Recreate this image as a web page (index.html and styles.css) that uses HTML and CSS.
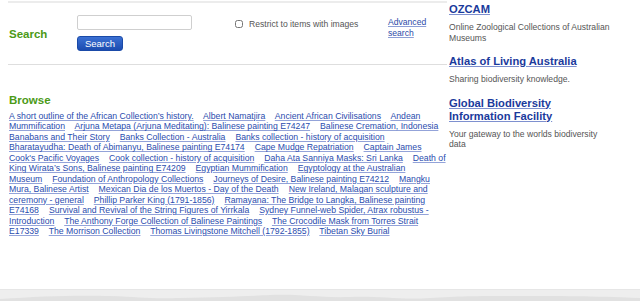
FILE: index.html
```html
<!DOCTYPE html>
<html lang="en">
<head>
    <meta charset="UTF-8">
    <meta name="viewport" content="width=device-width, initial-scale=1.0">
    <title>Browse collections</title>
    <link rel="stylesheet" href="styles.css">
</head>
<body>
    <div class="page">
        <div class="main-column">
            <div class="search-box">
                <h2 class="section-title search-title">Search</h2>
                <form class="search-form">
                    <input type="text" class="search-input">
                    <button type="button" class="search-button">Search</button>
                </form>
                <label class="restrict">
                    <input type="checkbox" class="restrict-check">
                    Restrict to items with images
                </label>
                <a href="#" class="advanced-link">Advanced search</a>
            </div>

            <div class="browse">
                <h2 class="section-title">Browse</h2>
                <div class="browse-list">
                    <a href="#">A short outline of the African Collection’s history.</a>
                    <a href="#">Albert Namatjira</a>
                    <a href="#">Ancient African Civilisations</a>
                    <a href="#">Andean Mummification</a>
                    <a href="#">Arjuna Metapa (Arjuna Meditating): Balinese painting E74247</a>
                    <a href="#">Balinese Cremation, Indonesia</a>
                    <a href="#">Banabans and Their Story</a>
                    <a href="#">Banks Collection - Australia</a>
                    <a href="#">Banks collection - history of acquisition</a>
                    <a href="#">Bharatayudha: Death of Abimanyu, Balinese painting E74174</a>
                    <a href="#">Cape Mudge Repatriation</a>
                    <a href="#">Captain James Cook's Pacific Voyages</a>
                    <a href="#">Cook collection - history of acquisition</a>
                    <a href="#">Daha Ata Sanniya Masks: Sri Lanka</a>
                    <a href="#">Death of King Wirata’s Sons, Balinese painting E74209</a>
                    <a href="#">Egyptian Mummification</a>
                    <a href="#">Egyptology at the Australian Museum</a>
                    <a href="#">Foundation of Anthropology Collections</a>
                    <a href="#">Journeys of Desire, Balinese painting E74212</a>
                    <a href="#">Mangku Mura, Balinese Artist</a>
                    <a href="#">Mexican Dia de los Muertos - Day of the Death</a>
                    <a href="#">New Ireland, Malagan sculpture and ceremony - general</a>
                    <a href="#">Phillip Parker King (1791-1856)</a>
                    <a href="#">Ramayana: The Bridge to Langka, Balinese painting E74168</a>
                    <a href="#">Survival and Revival of the String Figures of Yirrkala</a>
                    <a href="#">Sydney Funnel-web Spider, Atrax robustus - Introduction</a>
                    <a href="#">The Anthony Forge Collection of Balinese Paintings</a>
                    <a href="#">The Crocodile Mask from Torres Strait E17339</a>
                    <a href="#">The Morrison Collection</a>
                    <a href="#">Thomas Livingstone Mitchell (1792-1855)</a>
                    <a href="#">Tibetan Sky Burial</a>
                </div>
            </div>
        </div>

        <div class="side-column">
            <div class="partner">
                <h3><a href="#">OZCAM</a></h3>
                <p>Online Zoological Collections of Australian Museums</p>
            </div>
            <div class="partner">
                <h3><a href="#">Atlas of Living Australia</a></h3>
                <p>Sharing biodiversity knowledge.</p>
            </div>
            <div class="partner">
                <h3><a href="#">Global Biodiversity Information Facility</a></h3>
                <p>Your gateway to the worlds biodiversity data</p>
            </div>
        </div>
    </div>

    <div class="footer">
        <svg class="footer-wave" viewBox="0 0 640 11" preserveAspectRatio="none">
            <path d="M0 9 C40 6 80 5 110 6 C140 7 150 9 180 8 C220 7 250 6 270 5 C300 4 320 8 350 7 C380 6 400 10 430 8 C460 6 480 6 520 6 C560 6 590 6 640 8 L640 11 L0 11 Z" fill="#e1e1e1"/>
        </svg>
    </div>
</body>
</html>
```

FILE: styles.css
```css
html, body {
    margin: 0;
    padding: 0;
}
body {
    font-family: "Liberation Sans", Arial, sans-serif;
    background-color: #fff;
    min-height: 100vh;
    display: flex;
    flex-direction: column;
}
.page {
    flex: 1;
    display: flex;
    gap: 2px;
    padding: 0 0 0 8px;
}
.main-column {
    width: 439px;
}
.search-box {
    display: flex;
    align-items: flex-start;
    border-top: 2px solid #ececec;
    border-bottom: 1px solid #dedede;
    margin-top: 1px;
    height: 64px;
    box-sizing: border-box;
    padding-left: 1px;
}
.section-title {
    margin: 0;
    font-size: 11.5px;
    line-height: 13px;
    font-weight: bold;
    color: #4c9a17;
}
.search-title {
    width: 68px;
    margin-top: 25px;
}
.search-form {
    display: flex;
    flex-direction: column;
    align-items: flex-start;
    gap: 6px;
    margin: 12px 0 0 0;
    width: 158px;
}
.search-input {
    width: 115px;
    height: 15px;
    box-sizing: border-box;
    border: 1px solid #cfcfcf;
    border-radius: 2px;
    margin: 0;
    padding: 0 3px;
}
.search-button {
    width: 46px;
    height: 15px;
    padding: 0;
    border: 1px solid #1a4aa8;
    border-radius: 3px;
    background: linear-gradient(#3b70d3, #1c4cb0);
    color: #fff;
    font-family: "Liberation Sans", Arial, sans-serif;
    font-size: 9.5px;
    line-height: 13px;
}
.restrict {
    display: flex;
    align-items: center;
    gap: 6px;
    margin-top: 16px;
    width: 153px;
    font-size: 8.6px;
    color: #555;
}
.restrict-check {
    width: 8px;
    height: 8px;
    margin: 0;
}
.advanced-link {
    margin-top: 14px;
    width: 45px;
    font-size: 8.6px;
    line-height: 11px;
    color: #2b4aa8;
    text-decoration-color: #8d9ed6;
}
.browse {
    padding: 29px 0 0 1px;
}
.browse-list {
    margin-top: 4px;
    font-size: 8.7px;
    line-height: 10.45px;
}
.browse-list a {
    color: #2a4cae;
    text-decoration-color: #93a3d9;
    margin-right: 7.5px;
}
.side-column {
    width: 166px;
    padding-top: 3px;
}
.partner {
    margin-bottom: 12px;
}
.partner h3 {
    margin: 0;
    font-size: 11.2px;
    line-height: 13px;
}
.partner h3 a {
    color: #1a3a9c;
    text-decoration-color: #7e90cf;
}
.partner p {
    margin: 6px 0 0 0;
    font-size: 8.6px;
    line-height: 10.5px;
    color: #555;
}
.footer {
    height: 11px;
    border-top: 1px solid #e6e6e6;
    background-color: #eeeeee;
}
.footer-wave {
    display: block;
    width: 100%;
    height: 11px;
}
```
